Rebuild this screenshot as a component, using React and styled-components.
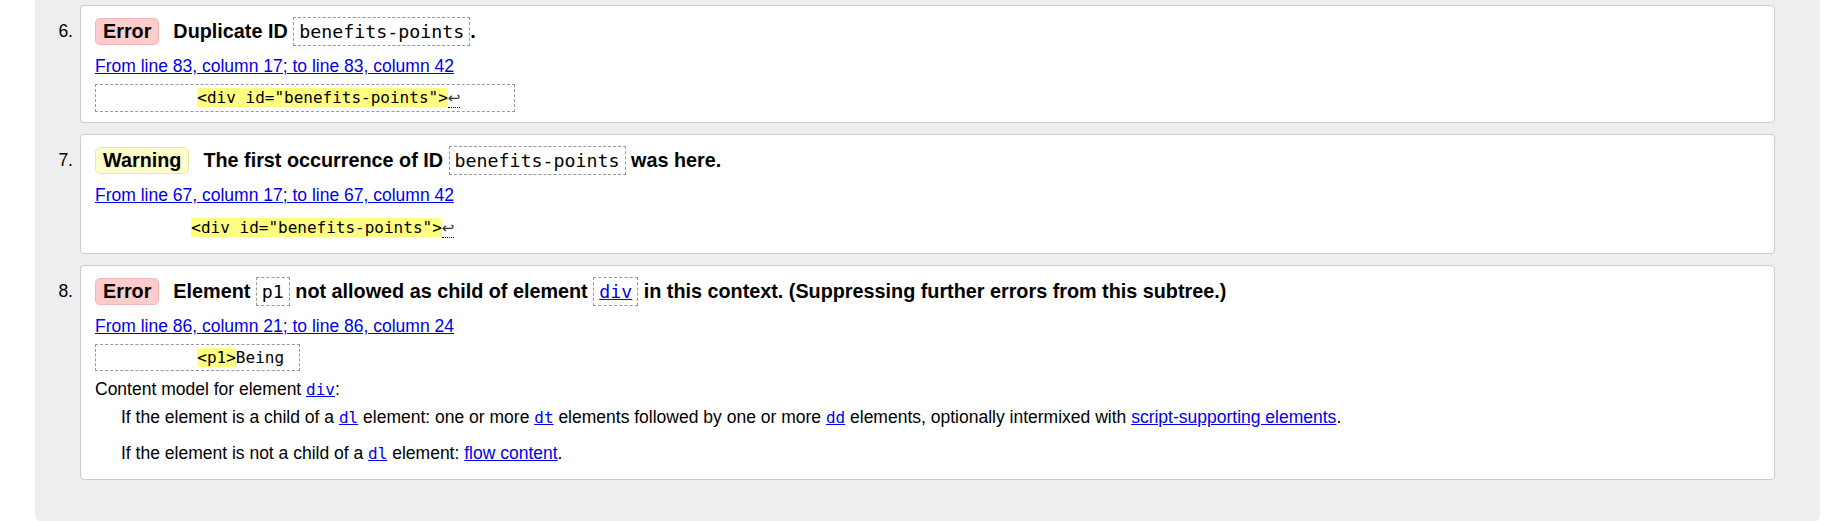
import React from "react";
import styled, { createGlobalStyle } from "styled-components";

const GlobalStyle = createGlobalStyle`
  html, body { margin: 0; padding: 0; background: #fff; }
  body {
    font-family: "Liberation Sans", Arial, sans-serif;
    font-size: 17.5px;
    color: #000;
  }
`;

const Panel = styled.div`
  margin: 0 11px 0 35px;
  background: #eee;
  padding: 5px 45px 41px 0;
  border-radius: 0 0 5px 5px;
`;

const MessageList = styled.ol`
  list-style: none;
  margin: 0;
  padding: 0;
  display: flex;
  flex-direction: column;
  gap: 11px;
`;

const Item = styled.li`
  display: grid;
  grid-template-columns: 45px 1fr;
`;

const Marker = styled.span`
  text-align: right;
  padding: 11px 7px 0 0;
  line-height: 30px;
`;

const Card = styled.div`
  min-width: 0;
  background: #fff;
  border: 1px solid #ccc;
  border-radius: 4px;
  padding: 10px 14px;
`;

const Heading = styled.p`
  margin: 0;
  font-weight: bold;
  font-size: 19.8px;
  line-height: 30px;
`;

const Badge = styled.strong`
  display: inline-block;
  line-height: 22.8px;
  padding: 1px 7px;
  margin-right: 8.5px;
  border-radius: 5px;
  border: 1px solid ${(p) => (p.$kind === "error" ? "#f2b6b6" : "#e6e6a6")};
  background: ${(p) => (p.$kind === "error" ? "#ffcccc" : "#ffffcc")};
`;

const Code = styled.code`
  font-family: "DejaVu Sans Mono", monospace;
  font-size: 18.3px;
  font-weight: normal;
  line-height: 1;
  padding: 3px 5px;
  border: 1px dashed #999;
`;

const Link = styled.a`
  color: #0000ee;
  text-decoration: underline;
  font-family: ${(p) => (p.$mono ? '"DejaVu Sans Mono", monospace' : "inherit")};
  font-size: ${(p) => (p.$mono ? "16px" : "inherit")};
`;

const Location = styled.p`
  margin: 9px 0 0;
  line-height: 22px;
`;

const Extract = styled.pre`
  display: block;
  width: fit-content;
  margin: 7px 0 0;
  font-family: "DejaVu Sans Mono", monospace;
  font-size: 16px;
  line-height: 19px;
  white-space: pre;
  color: #000;
  padding: ${(p) => (p.$boxed ? "3px 5px" : "5px 0")};
  border: ${(p) => (p.$boxed ? "1px dashed #999" : "none")};
`;

const Highlight = styled.span`
  background: #ffff80;
`;

const LineFeed = styled.span`
  font-family: "DejaVu Sans", sans-serif;
  font-size: 15px;
  color: #333;
  border-bottom: 1px dotted #000;
`;

const ContentModel = styled.p`
  margin: 7px 0 0;
  line-height: 22px;
`;

const Rules = styled.div`
  margin: 5px 0 4px;
  padding-left: 26px;
  display: flex;
  flex-direction: column;
  gap: 13px;
`;

const Rule = styled.p`
  margin: 0;
  line-height: 22px;
`;

export default function App() {
  return (
    <>
      <GlobalStyle />
      <Panel>
        <MessageList>
          <Item>
            <Marker>6.</Marker>
            <Card>
              <Heading>
                <Badge $kind="error">Error</Badge> Duplicate ID <Code>benefits-points</Code>.
              </Heading>
              <Location>
                <Link href="#">From line 83, column 17; to line 83, column 42</Link>
              </Location>
              <Extract $boxed>
                {"          "}
                <Highlight>{'<div id="benefits-points">'}</Highlight>
                <LineFeed>↩</LineFeed>
                {"     "}
              </Extract>
            </Card>
          </Item>

          <Item>
            <Marker>7.</Marker>
            <Card>
              <Heading>
                <Badge $kind="warning">Warning</Badge> The first occurrence of ID{" "}
                <Code>benefits-points</Code> was here.
              </Heading>
              <Location>
                <Link href="#">From line 67, column 17; to line 67, column 42</Link>
              </Location>
              <Extract>
                {"          "}
                <Highlight>{'<div id="benefits-points">'}</Highlight>
                <LineFeed>↩</LineFeed>
              </Extract>
            </Card>
          </Item>

          <Item>
            <Marker>8.</Marker>
            <Card>
              <Heading>
                <Badge $kind="error">Error</Badge> Element <Code>p1</Code> not allowed as child of
                element{" "}
                <Code>
                  <Link href="#">div</Link>
                </Code>{" "}
                in this context. (Suppressing further errors from this subtree.)
              </Heading>
              <Location>
                <Link href="#">From line 86, column 21; to line 86, column 24</Link>
              </Location>
              <Extract $boxed>
                {"          "}
                <Highlight>{"<p1>"}</Highlight>
                {"Being "}
              </Extract>
              <ContentModel>
                Content model for element <Link $mono href="#">div</Link>:
              </ContentModel>
              <Rules>
                <Rule>
                  If the element is a child of a <Link $mono href="#">dl</Link> element: one or more{" "}
                  <Link $mono href="#">dt</Link> elements followed by one or more{" "}
                  <Link $mono href="#">dd</Link> elements, optionally intermixed with{" "}
                  <Link href="#">script-supporting elements</Link>.
                </Rule>
                <Rule>
                  If the element is not a child of a <Link $mono href="#">dl</Link> element:{" "}
                  <Link href="#">flow content</Link>.
                </Rule>
              </Rules>
            </Card>
          </Item>
        </MessageList>
      </Panel>
    </>
  );
}
